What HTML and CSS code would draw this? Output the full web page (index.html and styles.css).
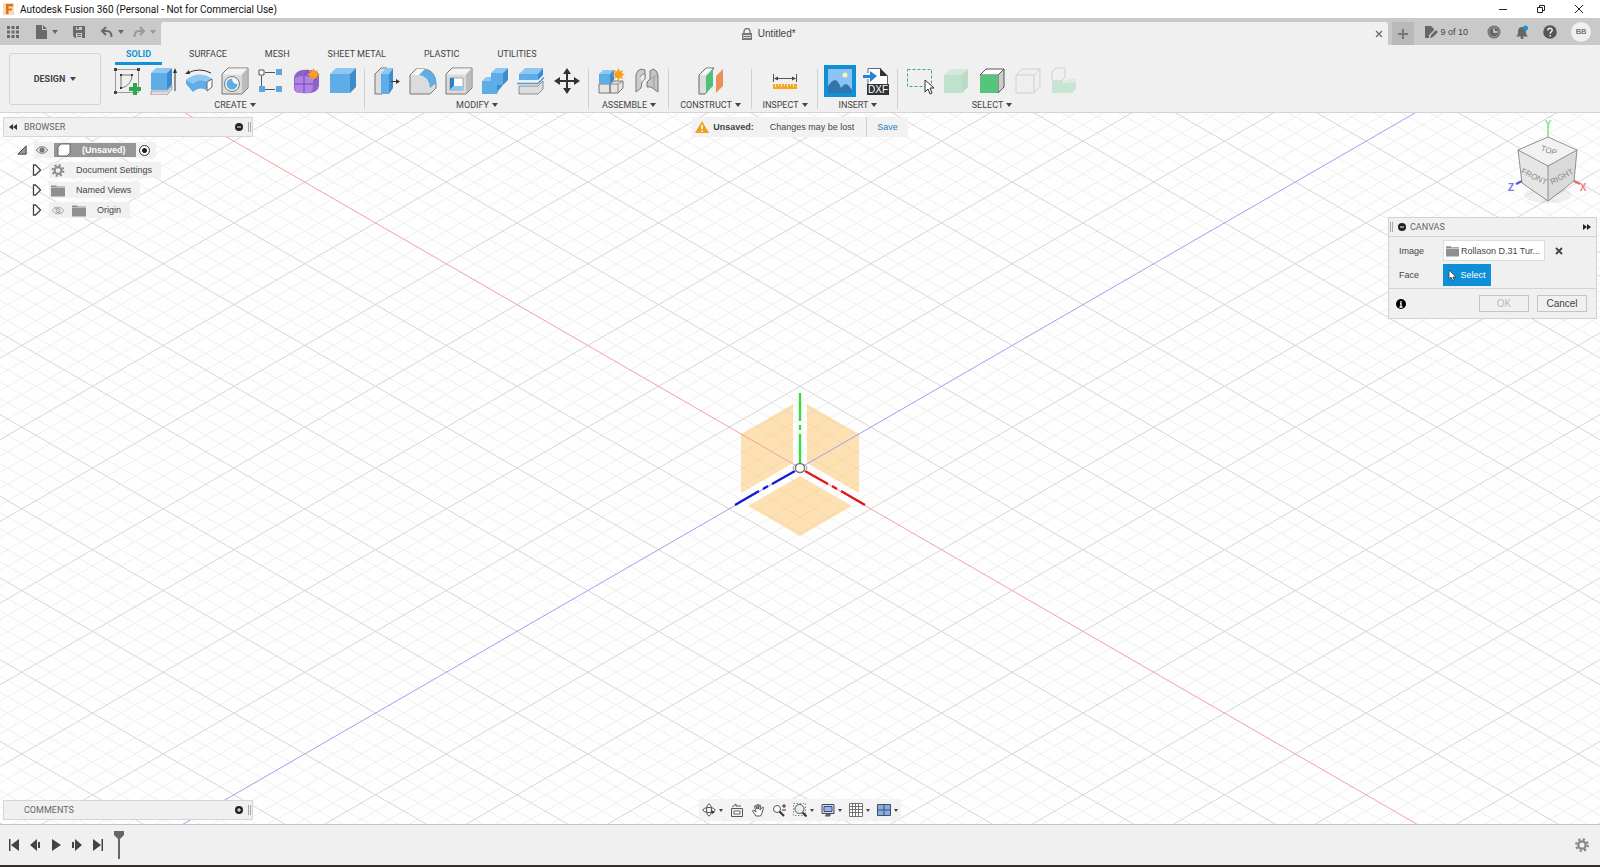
FILE: index.html
```html
<!DOCTYPE html>
<html lang="en">
<head>
  <meta charset="UTF-8" />
  <meta name="viewport" content="width=device-width, initial-scale=1.0"/>
  <title>Autodesk Fusion 360 (Personal - Not for Commercial Use)</title>
  <link rel="stylesheet" href="styles.css">
</head>
<body>
  <!-- shared symbols -->
  <svg class="defs" width="0" height="0">
    <symbol id="gear" viewBox="0 0 16 16">
      <circle cx="8" cy="8" r="4.2" fill="none" stroke="currentColor" stroke-width="2.6"/>
      <circle cx="8" cy="8" r="6.6" fill="none" stroke="currentColor" stroke-width="2.6" stroke-dasharray="2.6 2.58"/>
    </symbol>
    <symbol id="folder" viewBox="0 0 14 12">
      <path d="M0 1h5l1 1h8v1H0z M0 3.500h14V12H0z" fill="currentColor"/>
    </symbol>
    <symbol id="expand" viewBox="0 0 10 12">
      <path d="M1.500 1h2l5 5-5 5h-2z" fill="#fff" stroke="#444" stroke-width="1.300"/>
    </symbol>
    <symbol id="star" viewBox="-7 -7 14 14">
      <path d="M0-7 1.600-3.200 5-5 3.400-1.500 7 0 3.400 1.600 5 5 1.600 3.300 0 7-1.600 3.300-5 5-3.400 1.600-7 0-3.400-1.500-5-5-1.600-3.200z" fill="#f7a01b"/>
    </symbol>
    <symbol id="bluebox" viewBox="0 0 28 28">
      <path d="M1 7h20v19H1z" fill="#5fade6"/>
      <path d="M1 7l6-6h20l-6 6z" fill="#8cc8f3"/>
      <path d="M21 7l6-6v19l-6 6z" fill="#3d8ccb"/>
    </symbol>
  </svg>

  <header class="titlebar">
    <svg class="app-icon" viewBox="0 0 14 14"><path d="M1 1h11v12H1z" fill="#fbd9b5"/><path d="M4 2h7v2.400H6.500v2H10v2H6.500V12H4z" fill="#d9731a"/></svg>
    <span class="title">Autodesk Fusion 360 (Personal - Not for Commercial Use)</span>
    <div class="window-controls">
      <button aria-label="Minimize"><svg viewBox="0 0 10 10"><path d="M1 5.500h8" stroke="#222"/></svg></button>
      <button aria-label="Restore"><svg viewBox="0 0 10 10"><path d="M1.500 3.500h5v5h-5zM3.500 3V1.500h5v5H7" fill="none" stroke="#222"/></svg></button>
      <button aria-label="Close"><svg viewBox="0 0 10 10"><path d="M1 1l8 8M9 1l-8 8" stroke="#222"/></svg></button>
    </div>
  </header>

  <div class="appbar">
    <div class="quick">
      <button aria-label="Data panel"><svg viewBox="0 0 14 14"><path d="M1 1h3v3H1zM5.500 1h3v3h-3zM10 1h3v3h-3zM1 5.500h3v3H1zM5.500 5.500h3v3h-3zM10 5.500h3v3h-3zM1 10h3v3H1zM5.500 10h3v3h-3zM10 10h3v3h-3z" fill="#6a6a6a"/></svg></button>
      <button class="has-menu" aria-label="File"><svg viewBox="0 0 14 14"><path d="M2 0h6v5h5v9H2z M9 0l4 4H9z" fill="#6a6a6a"/></svg><i class="caret"></i></button>
      <button aria-label="Save file"><svg viewBox="0 0 14 14"><path d="M1 1h12v12H3l-2-2zM4 2v3h6V2zM4 8v5h6V8z" fill="#6a6a6a" fill-rule="evenodd"/><path d="M5 2h2v2H5zM5 9h4v1H5zM5 11h4v1H5z" fill="#6a6a6a"/></svg></button>
      <button class="has-menu" aria-label="Undo"><svg viewBox="0 0 14 14"><path d="M6 2L2 6l4 4M2 6h5c3 0 4.500 2 4.500 6" fill="none" stroke="#6a6a6a" stroke-width="2"/></svg><i class="caret"></i></button>
      <button class="has-menu dim" aria-label="Redo"><svg viewBox="0 0 14 14"><path d="M8 2l4 4-4 4M12 6H7c-3 0-4.500 2-4.500 6" fill="none" stroke="#6a6a6a" stroke-width="2"/></svg><i class="caret"></i></button>
    </div>
    <div class="doc-tab">
      <div class="doc-name">
        <svg viewBox="0 0 12 12"><path d="M3 5V3.500a3 3 0 0 1 6 0V5" fill="none" stroke="#777" stroke-width="1.400"/><path d="M1 5h10v7H1z" fill="#777"/><path d="M2 7.500h8M2 9.500h8" stroke="#ddd"/></svg>
        <span>Untitled*</span>
      </div>
      <button aria-label="Close tab"><svg viewBox="0 0 8 8"><path d="M1 1l6 6M7 1L1 7" stroke="#666" stroke-width="1.200"/></svg></button>
    </div>
    <button class="new-tab" aria-label="New design"><svg viewBox="0 0 12 12"><path d="M6 1v10M1 6h10" stroke="#777" stroke-width="2"/></svg></button>
    <div class="account">
      <button class="docs"><svg viewBox="0 0 14 14"><path d="M1 1h6l3 3v1L5 10v3H1z" fill="#666"/><path d="M6 13l1-3 5-5 2 2-5 5z" fill="#666"/></svg><span>9 of 10</span></button>
      <button aria-label="Job status"><svg viewBox="0 0 14 14"><circle cx="7" cy="7" r="6.500" fill="#666"/><circle cx="7" cy="7" r="5" fill="none" stroke="#aaa" stroke-width=".8"/><path d="M7 3.500V7h3.500" fill="none" stroke="#ddd" stroke-width="1.300"/></svg></button>
      <button aria-label="Notifications"><svg viewBox="0 0 14 14"><path d="M1 11.500c2-1.500 2-3 2-5.500s2-4 4-4 4 1.500 4 4 0 4 2 5.500z" fill="#666"/><circle cx="7" cy="12.500" r="1.500" fill="#666"/><circle cx="10.500" cy="3" r="2.500" fill="#1e90d6"/></svg></button>
      <button aria-label="Help"><svg viewBox="0 0 14 14"><circle cx="7" cy="7" r="6.800" fill="#555"/><path d="M4.800 5.500c0-3 4.600-2.800 4.400-.2C9.100 6.800 7.200 6.800 7.200 8.800M7.200 10v1.500" fill="none" stroke="#eee" stroke-width="1.500"/></svg></button>
      <button class="avatar">BB</button>
    </div>
  </div>

  <div class="ribbon">
    <button class="workspace">DESIGN <i class="caret"></i></button>
    <div class="ribbon-main">
      <nav class="tabs">
        <a href="#" class="active">SOLID</a>
        <a href="#">SURFACE</a>
        <a href="#">MESH</a>
        <a href="#">SHEET METAL</a>
        <a href="#">PLASTIC</a>
        <a href="#">UTILITIES</a>
      </nav>
      <div class="groups">
        <section class="group">
          <div class="tools">
            <button aria-label="Create Sketch"><svg viewBox="0 0 28 28"><path d="M2.500 2.500h23v23h-23z" fill="none" stroke="#999"/><path d="M1 1h3v3H1zM24 1h3v3h-3zM1 24h3v3H1z" fill="#444"/><path d="M8 8h11c0 6-4 12-11 13z" fill="none" stroke="#777"/><path d="M7 7h2v2H7zM18 7h2v2h-2zM7 20h2v2H7z" fill="#333"/><path d="M20 16h4v4h4v4h-4v4h-4v-4h-4v-4h4z" fill="#2ba84a"/></svg></button>
            <button aria-label="Extrude"><svg viewBox="0 0 28 28"><path d="M2 24h16l5-5v3l-5 6H2z" fill="#ddd" stroke="#888" stroke-width=".7"/><path d="M2 6h16v17H2z" fill="#5fade6"/><path d="M2 6l5-5h16l-5 5z" fill="#8cc8f3"/><path d="M18 6l5-5v17l-5 5z" fill="#3d8ccb"/><path d="M26 4v20" stroke="#333"/><path d="M26 1l2 5h-4z" fill="#333"/></svg></button>
            <button aria-label="Revolve"><svg viewBox="0 0 28 28"><path d="M3 6Q14 0 26 6" fill="none" stroke="#333"/><path d="M0 7l4-4 1 4z" fill="#333"/><path d="M1 13Q14 3 27 12l-5 3v8q-8-4-14 2L1 17z" fill="#5fade6"/><path d="M1 13Q14 3 27 12l-5 3q-8-4-14 2z" fill="#8cc8f3"/><path d="M22 15l5-3v8l-5 4z" fill="#fff" stroke="#666"/></svg></button>
            <button aria-label="Hole"><svg viewBox="0 0 28 28"><path d="M1 7l6-6h20v20l-6 6H1z" fill="#dcdcdc" stroke="#777"/><path d="M1.500 7.500l6-6h19l-5.500 6z" fill="#f3f3f3"/><path d="M21 7.500l5.500-6v19L21 26.500z" fill="#bbb"/><circle cx="11" cy="17" r="7.500" fill="#f5f5f5" stroke="#777"/><circle cx="11" cy="17" r="5.500" fill="#5fade6"/><path d="M11 11.500a5.500 5.500 0 0 1 5.500 5.500q-5 0-5.500-5.500z" fill="#fff"/></svg></button>
            <button aria-label="Rectangular Pattern"><svg viewBox="0 0 28 28"><path d="M8 5.500h10M4.500 9v10M8 22.500h10" stroke="#555"/><path d="M2 3h5v5H2z" fill="#fff" stroke="#555"/><path d="M19 2h6v6h-6zM2 19h6v6H2zM19 19h6v6h-6z" fill="#5ba7e0"/></svg></button>
            <button aria-label="Create Form"><svg viewBox="0 0 28 28"><path d="M1 11q0-4 5-7 4-2 12-1 8 0 8 6v9q0 5-5 7-4 2-13 1-7 0-7-5z" fill="#8f63cc"/><path d="M2 11q4-2 9-2t9 2v9q0 5-4 6H7q-5-1-5-5z" fill="#b184e3"/><path d="M11 9v17M2 17h18M11 9l4-6M20 14l6-4" stroke="#7446b5" fill="none"/><use href="#star" x="14" y="1" width="13" height="13"/></svg></button>
            <button aria-label="Box"><svg viewBox="0 0 28 28"><use href="#bluebox"/></svg></button>
          </div>
          <button class="group-label">CREATE <i class="caret"></i></button>
        </section>
        <section class="group">
          <div class="tools">
            <button aria-label="Press Pull"><svg viewBox="0 0 28 28"><path d="M2 7l6-6h6l-5 6v20H2z" fill="#ddd" stroke="#777"/><path d="M8 7h8v20H8z" fill="#5fade6"/><path d="M8 7l5-6h7l-4 6z" fill="#8cc8f3"/><path d="M16 7l4-6v20l-4 6z" fill="#3d8ccb"/><path d="M18 14.500h6" stroke="#333"/><path d="M23 12l4 2.500-4 2.500z" fill="#333"/></svg></button>
            <button aria-label="Fillet"><svg viewBox="0 0 28 28"><path d="M1 8l6-6h8q11 1 12 14v5l-6 6H1z" fill="#dcdcdc" stroke="#777"/><path d="M2 8l6-6h8l-6 6z" fill="#f7f7f7"/><path d="M10 8l6-6q10 2 11 14l-6 5Q20 9 10 8z" fill="#5fade6"/></svg></button>
            <button aria-label="Shell"><svg viewBox="0 0 28 28"><path d="M1 7l6-6h20v20l-6 6H1z" fill="#dcdcdc" stroke="#777"/><path d="M1.500 7.500l6-6h19l-5.500 6z" fill="#f3f3f3"/><path d="M21 7.500l5.500-6v19L21 26.500z" fill="#bbb"/><path d="M5 11h13v12H5z" fill="#fff" stroke="#777" stroke-width=".6"/><path d="M5 11h4v8l-4 4z" fill="#2f7fc1"/><path d="M5 23l4-4h9v4z" fill="#8cc8f3"/></svg></button>
            <button aria-label="Combine"><svg viewBox="0 0 28 28"><path d="M1 14h9V6h12v12h-6v9H1z" fill="#5fade6"/><path d="M1 14l4-4h5v4zM10 6l5-5h12l-5 5z" fill="#8cc8f3"/><path d="M22 6l5-5v12l-5 5zM16 18h6l-5 6-1 3z" fill="#3d8ccb"/></svg></button>
            <button aria-label="Split Body"><svg viewBox="0 0 28 28"><path d="M2 7h19v6H2z" fill="#5fade6"/><path d="M2 7l6-6h18l-5 6z" fill="#8cc8f3"/><path d="M21 7l5-6v7l-5 5z" fill="#3d8ccb"/><path d="M0 16.500h21l6-6" stroke="#4b9bd8" stroke-width="1.500" fill="none"/><path d="M2 19h19l5-5v8l-5 5H2z" fill="#ddd" stroke="#777" stroke-width=".8"/></svg></button>
            <button aria-label="Move"><svg viewBox="0 0 28 28"><path d="M14 4v20M4 14h20" stroke="#333" stroke-width="2"/><path d="M14 1l4 6h-8zM14 27l4-6h-8zM1 14l6-4v8zM27 14l-6-4v8z" fill="#333"/></svg></button>
          </div>
          <button class="group-label">MODIFY <i class="caret"></i></button>
        </section>
        <section class="group">
          <div class="tools">
            <button aria-label="New Component"><svg viewBox="0 0 28 28"><path d="M2 17h11v9H2zM13 17l4-3h9v7l-5 5h-8z" fill="#e4e4e4" stroke="#777"/><path d="M13 17h8v9M21 17l5-3" fill="none" stroke="#888"/><path d="M2 7h11v10H2z" fill="#5fade6"/><path d="M2 7l4-4h12l-5 4z" fill="#8cc8f3"/><path d="M13 7l4-4v10l-4 4z" fill="#3d8ccb"/><use href="#star" x="15" y="1" width="13" height="13"/></svg></button>
            <button aria-label="Joint"><svg viewBox="0 0 28 28"><path d="M3 8q1-5 5-6l4 1v9l-3 3-1 6-5 4z" fill="#ccc" stroke="#777"/><path d="M7 10q2-4 5-3v5l-3 3" fill="#eee" stroke="#888"/><path d="M25 8q-1-5-5-6l-3 2v8l-3 3v5h4l7 5z" fill="#c4c4c4" stroke="#777"/><path d="M17 12l4-2v11M21 10l4-2" fill="none" stroke="#999"/></svg></button>
          </div>
          <button class="group-label">ASSEMBLE <i class="caret"></i></button>
        </section>
        <section class="group construct">
          <div class="tools">
            <button aria-label="Offset Plane"><svg viewBox="0 0 28 28"><path d="M2 8l7-7h8l-7 9v15l-2 2H2z" fill="#ddd" stroke="#666"/><path d="M2.500 8l7-6.500h6L9 8z" fill="#f7f7f7"/><path d="M9 9l7-7v17l-7 7z" fill="#4fc07a"/><path d="M19 9l7-7v17l-7 7z" fill="#e8915c"/></svg></button>
          </div>
          <button class="group-label">CONSTRUCT <i class="caret"></i></button>
        </section>
        <section class="group inspect">
          <div class="tools">
            <button aria-label="Measure"><svg viewBox="0 0 28 28"><path d="M2.500 7v8M25.500 7v8M4 11.500h20" stroke="#555"/><path d="M3 11.500l4-2v4zM25 11.500l-4-2v4z" fill="#444"/><path d="M2 17h24v5H2z" fill="#f2a91f"/><path d="M4.500 17v3M7.500 17v2M10.500 17v3M13.500 17v2M16.500 17v3M19.500 17v2M22.500 17v3" stroke="#fff" stroke-width=".7"/></svg></button>
          </div>
          <button class="group-label">INSPECT <i class="caret"></i></button>
        </section>
        <section class="group">
          <div class="tools">
            <button class="pressed" aria-label="Canvas"><svg viewBox="0 0 28 28"><path d="M2 2h24v24H2z" fill="#8cc3f2"/><circle cx="19" cy="8" r="2.500" fill="#fff3b0"/><path d="M2 19q4-6 7-6t6 8q3-4 5-4t6 6v3H2z" fill="#3275ac"/></svg></button>
            <button aria-label="Insert DXF"><svg viewBox="0 0 28 28"><path d="M6 2h12v7h8v9H6z" fill="#fff"/><path d="M6 6V1.500h13M6 12v6M25.500 9v9" stroke="#666" fill="none"/><path d="M18 1l8 8h-8z" fill="#333"/><path d="M1 8h7V4l7 5-7 6v-4H1z" fill="#2184d8"/><path d="M5 17h22v11H5z" fill="#333"/><text x="16" y="26" class="dxf">DXF</text></svg></button>
          </div>
          <button class="group-label">INSERT <i class="caret"></i></button>
        </section>
        <section class="group">
          <div class="tools">
            <button aria-label="Select"><svg viewBox="0 0 28 28"><path d="M1.500 2.500h24v17h-24z" fill="none" stroke="#3fae6a" stroke-dasharray="3 2"/><path d="M19 13v12l3-3 2 5 2-1-2-5h4z" fill="#fff" stroke="#333"/></svg></button>
            <button class="faded" aria-label="Select body"><svg viewBox="0 0 28 28"><path d="M2 8h18v18H2z" fill="#55c47c"/><path d="M2 8l6-6h18l-6 6z" fill="#8ddca8"/><path d="M20 8l6-6v18l-6 6z" fill="#45ae6b"/></svg></button>
            <button aria-label="Select face"><svg viewBox="0 0 28 28"><path d="M2 8l6-6h18l-6 6z" fill="#fff" stroke="#555"/><path d="M20 8l6-6v18l-6 6z" fill="#ccc" stroke="#555"/><path d="M2 8h18v18H2z" fill="#55c47c"/></svg></button>
            <button class="faded" aria-label="Select edge"><svg viewBox="0 0 28 28"><path d="M2 8l6-6h18v18l-6 6H2zM2 8h18v18M20 8l6-6" fill="#eee" stroke="#888"/></svg></button>
            <button class="faded" aria-label="Select component"><svg viewBox="0 0 28 28"><path d="M2 13h11v3h13v6l-4 4H2z" fill="#6fce91"/><path d="M13 16l4-4h9v4z" fill="#a5e0b9"/><path d="M2 5l4-4h9v9l-3 4H2z" fill="#eee" stroke="#888"/></svg></button>
          </div>
          <button class="group-label">SELECT <i class="caret"></i></button>
        </section>
      </div>
    </div>
  </div>

  <main class="viewport">
    <svg class="scene" viewBox="-800 -355 1600 711" preserveAspectRatio="xMidYMid slice">
      <path id="minor" class="minor"/>
      <path id="major" class="major"/>
      <path d="M-59-34L-7-64V-5L-59 25zM59-34L7-64V-5L59 25zM0 8L52 38 0 68-52 38z" fill="#fbc368" fill-opacity=".5"/>
      <path d="M-1200-692.800L1200 692.800" stroke="#f5a0a0"/>
      <path d="M1200-692.800L-1200 692.800" stroke="#a0a0ee"/>
      <g stroke-width="2.300" fill="none">
        <path d="M0-5V-34M0-38V-43M0-47V-75" stroke="#2fe02f"/>
        <path d="M5 3L28 16M32 18L37 21M41 23L65 37" stroke="#e01818"/>
        <path d="M-5 3L-28 16M-32 18L-37 21M-41 23L-65 37" stroke="#1818d8"/>
      </g>
      <ellipse rx="7" ry="4" fill="none" stroke="#999"/>
      <circle r="4.500" fill="#fff" stroke="#777" stroke-width="1.400"/>
    </svg>

    <div class="left-col">
      <div class="panel-bar">
        <svg viewBox="0 0 10 8"><path d="M5 1v6L1 4zM9 1v6L5 4z" fill="#333"/></svg>
        <h2>BROWSER</h2>
        <button aria-label="Collapse browser"><svg viewBox="0 0 8 8"><circle cx="4" cy="4" r="4" fill="#222"/><path d="M2 4h4" stroke="#fff"/></svg></button>
        <span class="grip"></span>
      </div>
      <ul class="tree">
        <li>
          <svg class="arrow" viewBox="0 0 12 12"><path d="M11 1v10H1z" fill="#999" stroke="#333"/></svg>
          <div class="item root">
            <svg class="eye" viewBox="0 0 14 10"><path d="M1 5q6-7 12 0-6 7-12 0z" fill="#ddd" stroke="#888"/><circle cx="7" cy="5" r="2.500" fill="#777"/></svg>
            <span class="picked"><svg viewBox="0 0 14 14"><path d="M1 4l3-3h9v9l-3 3H1z" fill="#fff" stroke="#666"/></svg>(Unsaved)</span>
            <input type="radio" checked aria-label="Activate component">
          </div>
        </li>
        <li class="child"><svg class="arrow"><use href="#expand"/></svg><div class="item"><svg class="glyph"><use href="#gear"/></svg><span>Document Settings</span></div></li>
        <li class="child"><svg class="arrow"><use href="#expand"/></svg><div class="item"><svg class="glyph"><use href="#folder"/></svg><span>Named Views</span></div></li>
        <li class="child"><svg class="arrow"><use href="#expand"/></svg><div class="item"><svg class="glyph off" viewBox="0 0 14 10"><path d="M1 5q6-7 12 0-6 7-12 0z" fill="none" stroke="#aaa"/><circle cx="7" cy="5" r="2" fill="none" stroke="#999"/><path d="M3 1l8 8" stroke="#aaa"/></svg><svg class="glyph"><use href="#folder"/></svg><span>Origin</span></div></li>
      </ul>
    </div>

    <div class="notice">
      <svg viewBox="0 0 14 12"><path d="M7 0l7 12H0z" fill="#f0a020"/><path d="M7 4v4M7 9.500V11" stroke="#fff" stroke-width="1.500"/></svg>
      <strong>Unsaved:</strong>
      <span class="message">Changes may be lost</span>
      <a href="#">Save</a>
    </div>

    <div class="right-col">
      <svg class="viewcube" viewBox="3 0 90 90">
        <ellipse cx="44" cy="78" rx="24" ry="8" fill="#000" opacity=".06"/>
        <path d="M44 8V20" stroke="#7be87b" stroke-width="1.500"/>
        <text x="44" y="11" fill="#7be87b" class="axis">Y</text>
        <path d="M18 64l-6 3" stroke="#5555dd" stroke-width="2"/>
        <text x="7" y="74" fill="#7777e8" class="axis">Z</text>
        <path d="M70 64l6 3" stroke="#ee6666" stroke-width="2"/>
        <text x="79" y="74" fill="#f08080" class="axis">X</text>
        <path d="M14 33L44 20 73 33 44 49z" fill="#f2f2f2"/>
        <path d="M14 33L44 49V84L18 66z" fill="#e6e6e6"/>
        <path d="M73 33L44 49V84L70 64z" fill="#dadada"/>
        <path d="M14 33L44 20 73 33 44 49zM14 33L18 66 44 84 70 64 73 33M44 49V84" fill="none" stroke="#777" stroke-width=".8"/>
        <text class="face" transform="translate(44 36) rotate(18)">TOP</text>
        <text class="face" transform="translate(29 62) rotate(26)">FRONT</text>
        <text class="face" transform="translate(59 62) rotate(-28)">RIGHT</text>
      </svg>
      <form class="dialog">
        <div class="dialog-head">
          <span class="grip"></span>
          <button type="button" aria-label="Collapse dialog"><svg viewBox="0 0 8 8"><circle cx="4" cy="4" r="4" fill="#222"/><path d="M2 4h4" stroke="#fff"/></svg></button>
          <h2>CANVAS</h2>
          <svg class="pin" viewBox="0 0 10 8"><path d="M1 1v6l4-3zM5 1v6l4-3z" fill="#222"/></svg>
        </div>
        <div class="dialog-body">
          <label for="image">Image</label>
          <div class="field">
            <button type="button" id="image" class="file"><svg><use href="#folder"/></svg>Rollason D.31 Tur...</button>
            <button type="button" aria-label="Remove image"><svg class="remove" viewBox="0 0 8 8"><path d="M1 1l6 6M7 1L1 7" stroke="#444" stroke-width="1.800"/></svg></button>
          </div>
          <label for="face">Face</label>
          <div class="field">
            <button type="button" id="face" class="select"><svg viewBox="0 0 8 12"><path d="M1 1v9l2-2 2 4 1-1-1-3h3z" fill="#fff" stroke="#333" stroke-width=".7"/></svg>Select</button>
          </div>
        </div>
        <div class="dialog-foot">
          <svg class="info" viewBox="0 0 10 10"><circle cx="5" cy="5" r="5" fill="#000"/><path d="M5 2v1.500M4 4.500h1V8M3.500 8h3" fill="none" stroke="#fff" stroke-width="1.300"/></svg>
          <button type="submit" disabled>OK</button>
          <button type="button">Cancel</button>
        </div>
      </form>
    </div>

    <div class="panel-bar comments">
      <h2>COMMENTS</h2>
      <button aria-label="Expand comments"><svg viewBox="0 0 8 8"><circle cx="4" cy="4" r="4" fill="#222"/><path d="M2 4h4M4 2v4" stroke="#fff"/></svg></button>
      <span class="grip"></span>
    </div>

    <div class="navbar">
      <button aria-label="Orbit"><svg viewBox="0 0 14 14"><ellipse cx="7" cy="7" rx="6" ry="2.500" fill="none" stroke="#555"/><ellipse cx="7" cy="7" rx="2.500" ry="6" fill="none" stroke="#555"/><path d="M9 7l4 2-3 2z" fill="#333"/></svg><i class="caret"></i></button>
      <button aria-label="Look At"><svg viewBox="0 0 14 14"><path d="M1.500 5.500h11v8h-11zM2 4l4-3v2h5" fill="#eee" stroke="#555"/><path d="M4 8h6v3H4z" fill="#fff" stroke="#666"/></svg></button>
      <button aria-label="Pan"><svg viewBox="0 0 14 14"><path d="M5 13L1.500 8l1-1L5 9 3.500 3l1-.5L6 6V1.500h1.200V6L8.500 2l1 .3L9 7l2.500-3 1 .5L11 10l-1.500 3z" fill="#fff" stroke="#444" stroke-width=".9"/></svg></button>
      <button aria-label="Zoom"><svg viewBox="0 0 14 14"><circle cx="5" cy="6" r="3.500" fill="#fff" stroke="#555"/><path d="M7.500 8.500L12 13" stroke="#333" stroke-width="2"/><path d="M10 3h4M12 1v4M10 7h4" stroke="#333"/></svg></button>
      <button aria-label="Fit"><svg viewBox="0 0 14 14"><path d="M.5.500h12v12H.5z" fill="none" stroke="#888" stroke-dasharray="1.500 1.500"/><circle cx="6.500" cy="6" r="4.500" fill="#e3f2ec" stroke="#555"/><path d="M9.500 9.500L13.500 13.500" stroke="#333" stroke-width="2"/></svg><i class="caret"></i></button>
      <button aria-label="Display Settings"><svg viewBox="0 0 14 14"><path d="M1 1.500h12v9H1z" fill="#ddd" stroke="#446"/><path d="M3 3.500h8v5H3z" fill="#8eb8ee" stroke="#447"/><path d="M5 11h4v2H4" stroke="#555" fill="#777"/></svg><i class="caret"></i></button>
      <button aria-label="Grid and Snaps"><svg viewBox="0 0 14 14"><path d="M.5.500h13v13H.5zM3.500 0v14M6.500 0v14M9.500 0v14M0 3.500h14M0 6.500h14M0 9.500h14" fill="#fff" stroke="#666" stroke-width=".9"/></svg><i class="caret"></i></button>
      <button aria-label="Viewports"><svg viewBox="0 0 14 14"><path d="M.5 1.500h13v11H.5zM7 1.500v11M.5 7h13" fill="#86aee0" stroke="#3d506c"/></svg><i class="caret"></i></button>
    </div>
  </main>

  <footer class="timeline">
    <button aria-label="Go to start"><svg viewBox="0 0 12 12"><path d="M1 0h1.500v12H1zM11 0v12L3 6z" fill="#444"/></svg></button>
    <button aria-label="Step back"><svg viewBox="0 0 12 12"><path d="M8 0v12L1 6zM9 3h2v6H9z" fill="#444"/></svg></button>
    <button aria-label="Play"><svg viewBox="0 0 12 12"><path d="M2 0l9 6-9 6z" fill="#444"/></svg></button>
    <button aria-label="Step forward"><svg viewBox="0 0 12 12"><path d="M4 0v12l7-6zM1 3h2v6H1z" fill="#444"/></svg></button>
    <button aria-label="Go to end"><svg viewBox="0 0 12 12"><path d="M9.500 0H11v12H9.500zM1 0v12l8-6z" fill="#444"/></svg></button>
    <svg class="marker" viewBox="0 0 12 28"><path d="M1 0h10v4L7 8v20H5V8L1 4z" fill="#666"/></svg>
    <button class="settings" aria-label="Timeline settings"><svg><use href="#gear"/></svg></button>
  </footer>
  <script src="script.js"></script>
</body>
</html>
```
FILE: styles.css
```css
* {
  box-sizing: border-box;
}

body {
  margin: 0;
  height: 100vh;
  display: flex;
  flex-direction: column;
  overflow: hidden;
  background: #f0f0f0;
  color: #444;
  font-family: "Liberation Sans", Arial, sans-serif;
  font-size: 9px;
}

button {
  display: flex;
  align-items: center;
  justify-content: center;
  padding: 0;
  border: none;
  background: none;
  color: inherit;
  font: inherit;
}

a {
  text-decoration: none;
  color: inherit;
}

h2 {
  margin: 0;
  font-family: Roboto, sans-serif;
  font-size: 9px;
  font-weight: normal;
  color: #666;
}

svg {
  display: block;
  flex-shrink: 0;
}

.defs {
  position: absolute;
}

.caret {
  border: 3px solid transparent;
  border-top: 4px solid #444;
  border-bottom: none;
}

/* title bar */
.titlebar {
  display: flex;
  align-items: center;
  height: 18px;
  background: #fff;
  color: #111;
  font-family: Roboto, "Open Sans", sans-serif;
  font-size: 10px;
}

.app-icon {
  width: 14px;
  height: 14px;
  margin: 0 4px 0 2px;
}

.window-controls {
  display: flex;
  margin-left: auto;
  margin-right: 2px;
}

.window-controls button {
  width: 38px;
}

.window-controls svg {
  width: 10px;
  height: 10px;
}

/* quick access + document tab */
.appbar {
  display: flex;
  height: 27px;
  padding-top: 4px;
  background: #c9c9c9;
}

.quick {
  display: flex;
  align-items: center;
  gap: 12px;
  width: 161px;
  padding-bottom: 4px;
  padding-left: 6px;
}

.quick svg {
  width: 14px;
  height: 14px;
}

.quick .has-menu {
  gap: 4px;
}

.quick .caret {
  border-top-color: #666;
}

.quick .dim {
  opacity: 0.5;
}

.quick button + .has-menu,
.quick .has-menu + button {
  margin-left: 2px;
}

.quick .has-menu + .has-menu {
  margin-left: -4px;
}

.doc-tab {
  flex: 1;
  display: flex;
  align-items: center;
  padding-right: 5px;
  background: #f0f0f0;
  border-radius: 3px 3px 0 0;
}

.doc-name {
  flex: 1;
  display: flex;
  align-items: center;
  justify-content: center;
  gap: 5px;
  font-size: 10px;
}

.doc-name svg {
  width: 12px;
  height: 12px;
}

.doc-tab button svg {
  width: 8px;
  height: 8px;
}

.new-tab {
  width: 22px;
  margin: 0 10px 0 4px;
  background: #b9b9b9;
}

.new-tab svg {
  width: 12px;
  height: 12px;
}

.account {
  display: flex;
  align-items: center;
  gap: 14px;
  padding-right: 9px;
  padding-bottom: 4px;
}

.account svg {
  width: 14px;
  height: 14px;
}

.docs {
  gap: 2px;
  margin-right: 5px;
}

.avatar {
  width: 20px;
  height: 20px;
  border-radius: 50%;
  background: #f0f0f0;
  font-size: 8px;
}

/* ribbon */
.ribbon {
  display: flex;
  height: 68px;
  border-bottom: 1px solid #d4d4d4;
  font-family: Roboto, sans-serif;
}

.workspace {
  gap: 5px;
  width: 92px;
  height: 52px;
  margin: 8px 4px 0 9px;
  border: 1px solid #d2d2d2;
  border-radius: 3px;
  font-weight: bold;
}

.tabs {
  display: flex;
  height: 20px;
  padding-left: 2px;
  line-height: 19px;
}

.tabs a {
  margin: 0 8px;
  padding: 0 11px;
}

.tabs .active {
  color: #1292d4;
  font-weight: bold;
  border-bottom: 3px solid #1292d4;
}

.groups {
  display: flex;
}

.group {
  display: flex;
  flex-direction: column;
  align-items: center;
  padding: 0 4px;
}

.group:not(:last-child) {
  background: linear-gradient(#d0d0d0, #d0d0d0) right 4px / 1px 40px no-repeat;
}

.group.construct {
  min-width: 83px;
}

.group.inspect {
  min-width: 66px;
}

.tools {
  display: flex;
}

.tools button {
  width: 36px;
  height: 32px;
}

.tools svg {
  width: 28px;
  height: 28px;
}

.tools .pressed svg {
  border: 2px solid #0e8fd6;
  width: 32px;
  height: 32px;
  background: #0e8fd6;
}

.tools .faded {
  opacity: 0.3;
}

.dxf {
  font: 10px "Liberation Sans", sans-serif;
  fill: #fff;
  text-anchor: middle;
}

.group-label {
  gap: 3px;
  height: 15px;
}

/* modelling area */
.viewport {
  position: relative;
  flex: 1;
  min-height: 0;
  display: grid;
  grid-template-columns: 1fr auto 1fr;
  grid-template-rows: 1fr auto;
  padding: 4px 3px 3px;
  background: #fefefe;
}

.viewport > * {
  z-index: 1;
}

.scene {
  position: absolute;
  width: 100%;
  height: 100%;
}

.viewport > .scene {
  z-index: 0;
}

.minor {
  stroke: #efefef;
  fill: none;
}

.major {
  stroke: #d6d6d6;
  fill: none;
}

.panel-bar {
  display: flex;
  align-items: center;
  width: 250px;
  height: 20px;
  padding: 0 1px 0 4px;
  background: #f0f0f0;
  border: 1px solid #d6d6d6;
}

.panel-bar > svg {
  width: 10px;
  height: 8px;
}

.panel-bar h2 {
  flex: 1;
  padding-left: 6px;
}

.panel-bar button svg {
  width: 8px;
  height: 8px;
}

.grip {
  width: 3px;
  height: 10px;
  margin-left: 5px;
  border: 1px solid #aaa;
  border-width: 0 1px;
}

.comments {
  align-self: end;
  margin-bottom: 1px;
}

.comments h2 {
  padding-left: 16px;
}

.tree {
  margin: 3px 0 0;
  padding: 0;
  list-style: none;
}

.tree li {
  display: flex;
  align-items: center;
  gap: 7px;
  height: 20px;
  padding-left: 14px;
}

.tree .child {
  padding-left: 29px;
}

.arrow {
  width: 10px;
  height: 12px;
}

.item {
  display: flex;
  align-items: center;
  height: 16px;
  padding: 0 9px 0 2px;
  background: rgba(240, 240, 240, 0.9);
}

.glyph {
  width: 14px;
  height: 13px;
  margin-right: 11px;
  color: #8f8f8f;
}

.off {
  margin-right: 7px;
}

.item.root {
  padding: 0 6px 0 1px;
}

.eye {
  width: 14px;
  height: 10px;
  margin-right: 5px;
}

.picked {
  display: flex;
  align-items: center;
  gap: 11px;
  height: 14px;
  padding: 0 10px 0 3px;
  background: #969696;
  color: #fff;
  font-weight: bold;
}

.picked svg {
  width: 14px;
  height: 14px;
}

.root input {
  appearance: none;
  width: 11px;
  height: 11px;
  margin: 0 0 0 3px;
  border: 1px solid #333;
  border-radius: 50%;
  background: radial-gradient(#222 2px, #fff 3px);
}

.notice {
  display: flex;
  align-items: center;
  align-self: start;
  height: 20px;
  padding: 0 10px 0 3px;
  background: #f2f2f2;
}

.notice svg {
  width: 14px;
  height: 12px;
  margin-right: 4px;
}

.message {
  margin-left: 16px;
  padding-right: 12px;
  border-right: 1px solid #ccc;
  line-height: 20px;
}

.notice a {
  margin-left: 10px;
  color: #1a7cc0;
}

.right-col {
  display: flex;
  flex-direction: column;
  align-items: flex-end;
}

.viewcube {
  width: 90px;
  height: 90px;
  margin-bottom: 10px;
}

.viewcube .axis {
  font: bold 10px "Liberation Sans", sans-serif;
  text-anchor: middle;
}

.viewcube .face {
  font: 8px "Liberation Sans", sans-serif;
  fill: #888;
  text-anchor: middle;
}

/* canvas dialog */
.dialog {
  width: 209px;
  background: #f0f0f0;
  border: 1px solid #d2d2d2;
}

.dialog-head {
  display: flex;
  align-items: center;
  height: 19px;
  padding: 0 4px 0 1px;
  border-bottom: 1px solid #d2d2d2;
}

.dialog-head .grip {
  margin: 0 5px 0 0;
}

.dialog-head h2 {
  flex: 1;
  padding-left: 4px;
}

.dialog-head button svg {
  width: 8px;
  height: 8px;
}

.pin {
  width: 10px;
  height: 8px;
}

.dialog-body {
  display: grid;
  grid-template-columns: 44px 1fr;
  align-items: center;
  row-gap: 3px;
  padding: 3px 10px 2px;
}

.field {
  display: flex;
  align-items: center;
  gap: 10px;
}

.file {
  justify-content: flex-start;
  gap: 2px;
  width: 102px;
  height: 21px;
  padding-left: 2px;
  background: #fff;
  border: 1px solid #ddd;
  white-space: nowrap;
}

.file svg {
  width: 13px;
  height: 12px;
  color: #8f8f8f;
}

.remove {
  width: 8px;
  height: 8px;
}

.select {
  gap: 4px;
  width: 48px;
  height: 22px;
  background: #0e8fd6;
  color: #fff;
}

.select svg {
  width: 8px;
  height: 12px;
}

.dialog-foot {
  display: flex;
  align-items: center;
  gap: 8px;
  height: 30px;
  padding: 0 9px 0 7px;
  border-top: 1px solid #d2d2d2;
}

.info {
  width: 10px;
  height: 10px;
  margin-right: auto;
}

.dialog-foot button {
  width: 50px;
  height: 17px;
  border: 1px solid #c4c4c4;
  font-size: 10px;
}

.dialog-foot button:disabled {
  color: #bbb;
}

.navbar {
  display: flex;
  align-items: center;
  justify-self: center;
  gap: 7px;
  height: 22px;
  padding: 0 3px;
  background: rgba(242, 242, 242, 0.9);
}

.navbar button {
  gap: 3px;
}

.navbar svg {
  width: 14px;
  height: 14px;
}

.navbar .caret {
  border-width: 3px 2px 0;
}

/* timeline */
.timeline {
  display: flex;
  align-items: center;
  gap: 9px;
  height: 43px;
  padding: 0 11px 0 8px;
  border-top: 1px solid #c4c4c4;
  border-bottom: 2px solid #33302e;
}

.timeline svg {
  width: 12px;
  height: 12px;
}

.timeline .marker {
  width: 12px;
  height: 28px;
}

.timeline .settings {
  margin-left: auto;
  color: #888;
}

.timeline .settings svg {
  width: 14px;
  height: 14px;
}
```
FILE: script.js
```js
// ground grid: two families of isometric lines, every fifth one is heavier
const slope = 0.5774;
const step = 16.34;
const reach = 1200;
let minor = "";
let major = "";

for (let i = -70; i <= 70; i++) {
  if (i === 0) continue; // the axes are drawn separately
  const y = i * step;
  const d = `M${-reach} ${y - reach * slope}L${reach} ${y + reach * slope}` +
            `M${-reach} ${y + reach * slope}L${reach} ${y - reach * slope}`;
  if (i % 5 === 0) {
    major += d;
  } else {
    minor += d;
  }
}

document.getElementById("minor").setAttribute("d", minor);
document.getElementById("major").setAttribute("d", major);
```
